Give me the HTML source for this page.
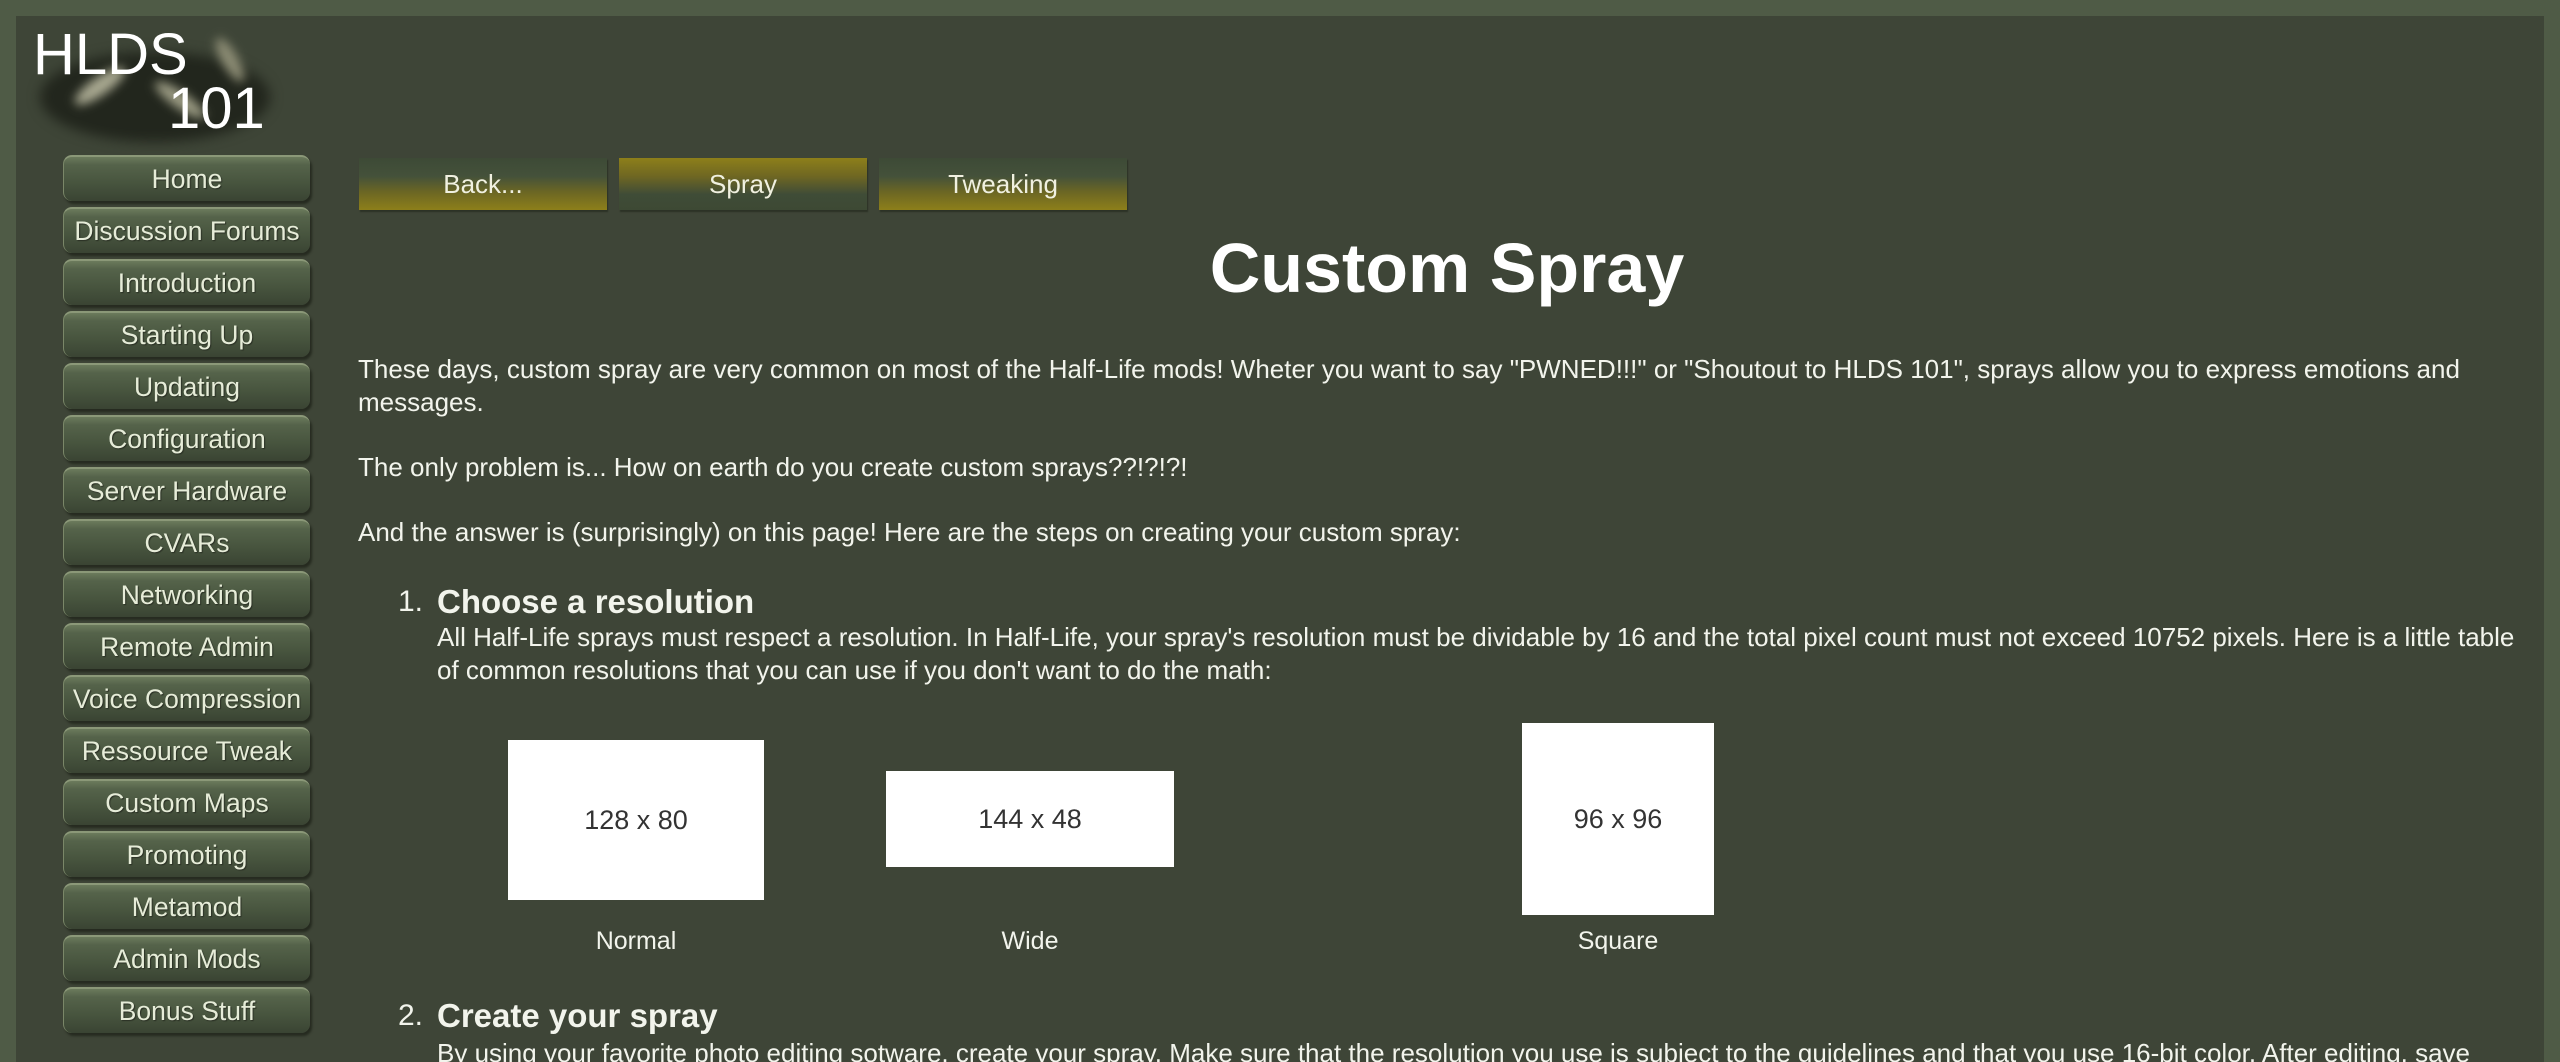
<!DOCTYPE html>
<html><head><meta charset="utf-8"><style>
html,body{margin:0;padding:0;width:2560px;height:1062px;overflow:hidden;}
body{background:#4f5b46;position:relative;font-family:"Liberation Sans",sans-serif;}
#panel{position:absolute;left:16px;top:16px;width:2528px;height:1046px;background:#3e4537;}
#logo{position:absolute;left:30px;top:22px;width:245px;height:118px;}
.blob{position:absolute;border-radius:50%;filter:blur(6px);}
.nav{position:absolute;left:63px;width:246px;height:44px;border-radius:9px;
 background:linear-gradient(#6b7a5c 0%,#55634a 18%,#47543e 60%,#3a4433 100%);
 border-top:2px solid #8b9878;border-left:1px solid #7a8768;box-shadow:2px 3px 2px #262b20;
 color:#e6ecd8;font-size:26.5px;text-align:center;line-height:44px;text-shadow:1px 1px 1px #2a3024;}
.tab{position:absolute;top:158px;width:248px;height:52px;color:#f0f0e0;font-size:26px;text-align:center;line-height:52px;box-shadow:1px 2px 1px #2c3226;}
.down{background:linear-gradient(#3d4a36 0%,#44513a 35%,#6b6624 65%,#8d7f1a 100%);}
.up{background:linear-gradient(#8d7f1a 0%,#6f6722 35%,#3f4c37 70%,#3d4934 100%);}
.t{position:absolute;color:#f2f4ec;font-size:26px;white-space:nowrap;}
h1{position:absolute;left:358px;width:2178px;top:228px;margin:0;text-align:center;color:#fff;font-size:70px;font-weight:bold;}
.h{position:absolute;color:#f2f4ec;font-size:33px;font-weight:bold;white-space:nowrap;}
.box{position:absolute;background:#fff;color:#333;font-size:27px;display:flex;align-items:center;justify-content:center;}
.lab{position:absolute;color:#f2f4ec;font-size:25px;text-align:center;}
</style></head><body>
<div id="panel"></div>
<div id="logo">
 <div class="blob" style="left:10px;top:30px;width:230px;height:90px;background:#22261d;"></div>
 <div class="blob" style="left:40px;top:55px;width:60px;height:18px;background:#a8a890;transform:rotate(-35deg);filter:blur(5px)"></div>
 <div class="blob" style="left:120px;top:70px;width:60px;height:16px;background:#9c9c84;transform:rotate(35deg);filter:blur(5px)"></div>
 <div class="blob" style="left:175px;top:30px;width:50px;height:16px;background:#8c8c74;transform:rotate(60deg);filter:blur(5px)"></div>
 <div style="position:absolute;left:3px;top:4px;color:#fff;font-size:58px;line-height:58px;">HLDS</div>
 <div style="position:absolute;left:138px;top:58px;color:#fff;font-size:58px;line-height:58px;">101</div>
</div>
<div class="nav" style="top:155px">Home</div>
<div class="nav" style="top:207px">Discussion Forums</div>
<div class="nav" style="top:259px">Introduction</div>
<div class="nav" style="top:311px">Starting Up</div>
<div class="nav" style="top:363px">Updating</div>
<div class="nav" style="top:415px">Configuration</div>
<div class="nav" style="top:467px">Server Hardware</div>
<div class="nav" style="top:519px">CVARs</div>
<div class="nav" style="top:571px">Networking</div>
<div class="nav" style="top:623px">Remote Admin</div>
<div class="nav" style="top:675px">Voice Compression</div>
<div class="nav" style="top:727px">Ressource Tweak</div>
<div class="nav" style="top:779px">Custom Maps</div>
<div class="nav" style="top:831px">Promoting</div>
<div class="nav" style="top:883px">Metamod</div>
<div class="nav" style="top:935px">Admin Mods</div>
<div class="nav" style="top:987px">Bonus Stuff</div>

<div class="tab down" style="left:359px">Back...</div>
<div class="tab up" style="left:619px">Spray</div>
<div class="tab down" style="left:879px">Tweaking</div>

<h1>Custom Spray</h1>
<div class="t" style="left:358px;top:354px">These days, custom spray are very common on most of the Half-Life mods! Wheter you want to say "PWNED!!!" or "Shoutout to HLDS 101", sprays allow you to express emotions and</div>
<div class="t" style="left:358px;top:387px">messages.</div>
<div class="t" style="left:358px;top:452px">The only problem is... How on earth do you create custom sprays??!?!?!</div>
<div class="t" style="left:358px;top:517px">And the answer is (surprisingly) on this page! Here are the steps on creating your custom spray:</div>

<div class="t" style="left:398px;top:585px;font-size:30px">1.</div>
<div class="h" style="left:437px;top:583px">Choose a resolution</div>
<div class="t" style="left:437px;top:622px">All Half-Life sprays must respect a resolution. In Half-Life, your spray's resolution must be dividable by 16 and the total pixel count must not exceed 10752 pixels. Here is a little table</div>
<div class="t" style="left:437px;top:655px">of common resolutions that you can use if you don't want to do the math:</div>

<div class="box" style="left:508px;top:740px;width:256px;height:160px">128 x 80</div>
<div class="box" style="left:886px;top:771px;width:288px;height:96px">144 x 48</div>
<div class="box" style="left:1522px;top:723px;width:192px;height:192px">96 x 96</div>
<div class="lab" style="left:508px;width:256px;top:927px">Normal</div>
<div class="lab" style="left:886px;width:288px;top:927px">Wide</div>
<div class="lab" style="left:1522px;width:192px;top:927px">Square</div>

<div class="t" style="left:398px;top:999px;font-size:30px">2.</div>
<div class="h" style="left:437px;top:997px">Create your spray</div>
<div class="t" style="left:437px;top:1038px">By using your favorite photo editing sotware, create your spray. Make sure that the resolution you use is subject to the guidelines and that you use 16-bit color. After editing, save</div>
</body></html>
